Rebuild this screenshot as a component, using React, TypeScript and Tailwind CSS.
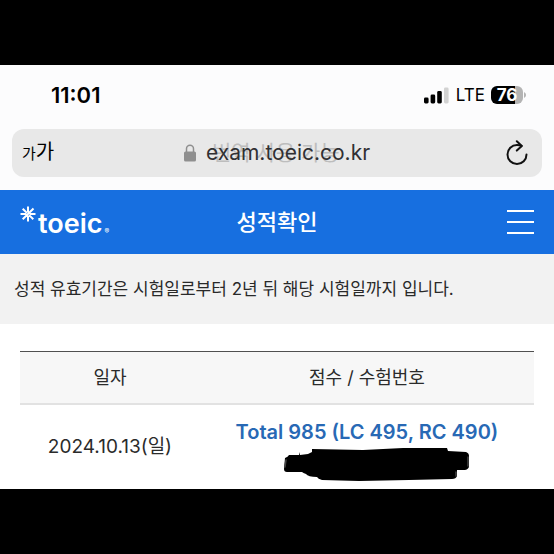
interface ScoreRow {
  date: string;
  score: string;
}

const rows: ScoreRow[] = [
  { date: "2024.10.13(일)", score: "Total 985 (LC 495, RC 490)" },
];

function StatusBar() {
  return (
    <div className="flex h-16 items-center justify-between pb-1 pl-[51px] pr-7">
      <span className="text-[22px] font-semibold leading-6 text-black">11:01</span>
      <div className="flex items-center gap-1.5">
        <svg width="26" height="17" viewBox="0 0 26 17" aria-hidden="true">
          <rect x="0" y="10.500" width="4.600" height="6" rx="1.400" fill="#000" />
          <rect x="6.600" y="7.500" width="4.600" height="9" rx="1.400" fill="#000" />
          <rect x="13.200" y="4" width="4.600" height="12.500" rx="1.400" fill="#000" />
          <rect x="20" y="0.500" width="4.600" height="16" rx="1.400" fill="#d2d2d2" />
        </svg>
        <span className="text-[17px] leading-6 text-black">LTE</span>
        <div className="flex items-center">
          <div className="flex h-[18px] w-8 items-center justify-center rounded-md bg-linear-to-r from-black from-76% to-[#b4b4b4] to-76%">
            <span className="text-[17px] font-bold leading-[18px] text-white">76</span>
          </div>
          <svg width="3" height="6" viewBox="0 0 3 6" aria-hidden="true">
            <path d="M1 0C2.400.8 3 1.800 3 3S2.400 5.200 1 6Z" fill="#b4b4b4" />
          </svg>
        </div>
      </div>
    </div>
  );
}

function AddressBar() {
  return (
    <div className="mx-3 flex h-12 items-center justify-between rounded-xl bg-[#e8e8e8] px-2.5">
      <button type="button" className="flex w-9 items-baseline text-black" aria-label="글자 크기">
        <span className="text-[15px] leading-6">가</span>
        <span className="text-[20px] leading-6">가</span>
      </button>
      <button type="button" className="relative flex items-center gap-2.5">
        <svg width="12" height="18" viewBox="0 0 12 18" aria-hidden="true">
          <path
            d="M2.500 8V4.800a3.500 3.500 0 0 1 7 0V8"
            fill="none"
            stroke="#8f8f8f"
            strokeWidth="1.500"
          />
          <rect x="0" y="7.500" width="12" height="10" rx="1.600" fill="#8f8f8f" />
        </svg>
        <span className="absolute left-7 whitespace-nowrap text-[21px] leading-6 text-[#bdbdbd]">
          번역 사용 가능
        </span>
        <span className="relative text-[21px] leading-6 text-[#303033]">exam.toeic.co.kr</span>
      </button>
      <button type="button" className="flex w-9 justify-end pr-1" aria-label="새로고침">
        <svg
          width="22"
          height="26"
          viewBox="0 0 22 26"
          fill="none"
          stroke="#111"
          strokeWidth="2"
          strokeLinecap="round"
          strokeLinejoin="round"
        >
          <path d="M20.500 14.500a9.500 9.500 0 1 1-9.500-9.500q2.500 0 4.500.9" />
          <path d="M10.800 1.200l5 4.700-5 4.700" />
        </svg>
      </button>
    </div>
  );
}

function SiteHeader() {
  return (
    <header className="grid h-16 grid-cols-[1fr_auto_1fr] items-center bg-[#176fe0] px-5 text-white">
      <a href="#" className="flex items-center gap-0.5" aria-label="toeic">
        <svg
          width="16"
          height="18"
          viewBox="0 -2 16 18"
          stroke="#fff"
          strokeWidth="2"
          className="self-start"
          aria-hidden="true"
        >
          <path d="M8 .500V6.500M8 9.500v6M.500 8h6M9.500 8h6M2.700 2.700l4.200 4.200M9.100 9.100l4.200 4.200M13.500 2.500L2.700 13.300" />
        </svg>
        <span className="pt-1 text-[27px] font-semibold leading-8">toeic</span>
        <span className="self-end text-[7px] leading-4">®</span>
      </a>
      <h1 className="text-[22px] font-medium leading-8">성적확인</h1>
      <button type="button" className="justify-self-end" aria-label="메뉴">
        <svg width="27" height="26" viewBox="0 0 27 26" stroke="#fff" strokeWidth="2.200">
          <path d="M0 2h27M0 13h27M0 24h27" />
        </svg>
      </button>
    </header>
  );
}

function ScoreTable() {
  return (
    <table className="w-full table-fixed border-t border-[#505050] text-center text-[18px] leading-6 text-[#2b2b2b]">
      <thead>
        <tr className="h-[52px] border-b-2 border-[#e2e2e2] bg-[#f7f7f7]">
          <th scope="col" className="w-[35%] font-normal">일자</th>
          <th scope="col" className="font-normal">점수 / 수험번호</th>
        </tr>
      </thead>
      <tbody>
        {rows.map((row) => (
          <tr key={row.date} className="h-[85px]">
            <td className="text-[19px]">{row.date}</td>
            <td className="pt-2">
              <p className="whitespace-nowrap text-[20px] font-semibold text-[#2869b5]">{row.score}</p>
              {/* Exam number is scribbled out */}
              <svg
                width="186"
                height="34"
                viewBox="0 0 186 34"
                className="mx-auto mt-1 translate-x-2.5"
                role="img"
                aria-label="수험번호 가림"
              >
                <path
                  d="M1 10Q4 9 5 7h10V4l1 3 8-1 4-2V1l51 1 40-2h44l1 3 18 1q3 1 3 4v10q0 3-4 4h-8v6q-1 3-5 3l-43 1-50 1-37-1q-4-1-5-3-9 0-11-3-3-1-4-2H3q-3 0-3-3Z"
                  fill="#000"
                />
                <path
                  d="M2 12l-1 7M184 9v9M172 24v4"
                  fill="none"
                  stroke="#444"
                  strokeWidth="1.500"
                  strokeLinecap="round"
                />
              </svg>
            </td>
          </tr>
        ))}
      </tbody>
    </table>
  );
}

export default function App() {
  return (
    <div className="flex min-h-screen flex-col justify-center bg-black font-['Inter','Noto_Sans_CJK_KR',sans-serif]">
      <div className="bg-[#fcfcfd] pb-[13px]">
        <StatusBar />
        <AddressBar />
      </div>
      <SiteHeader />
      <main className="bg-white">
        <p className="bg-[#f2f2f2] px-3.5 py-[23px] text-[17px] leading-6 text-[#292929]">
          성적 유효기간은 시험일로부터 2년 뒤 해당 시험일까지 입니다.
        </p>
        <div className="px-5 pt-[27px]">
          <ScoreTable />
        </div>
      </main>
    </div>
  );
}
